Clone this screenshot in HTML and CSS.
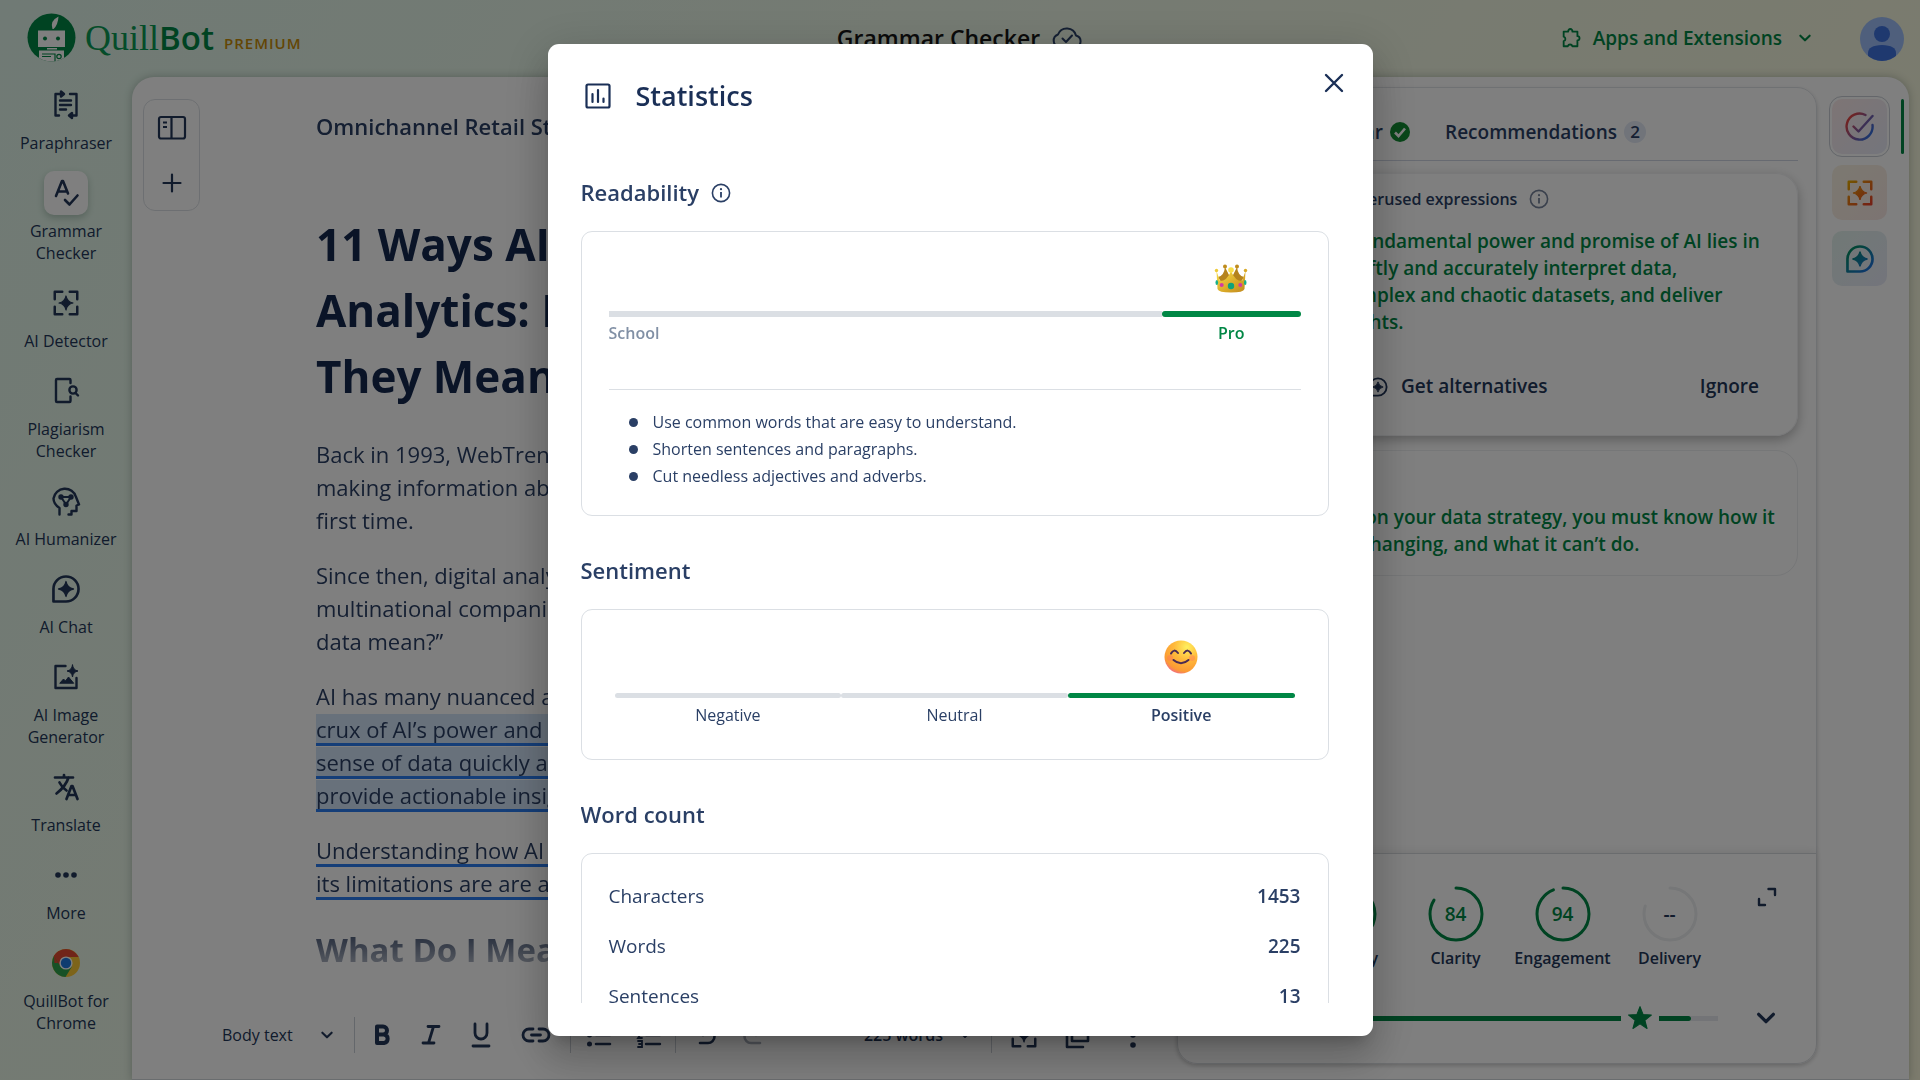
FILE: index.html
```html
<!DOCTYPE html>
<html lang="en">
<head>
<meta charset="utf-8">
<meta name="viewport" content="width=device-width, initial-scale=1">
<title>Grammar Checker - QuillBot</title>
<link rel="stylesheet" href="styles.css">
</head>
<body>
<svg class="sprite" aria-hidden="true">
  <symbol id="i-chat" viewBox="0 0 24 24"><path d="M2.6 21.4V12a9.4 9.4 0 1 1 9.4 9.4z" fill="none" stroke="currentColor" stroke-width="2" stroke-linejoin="round"/><path d="M12 6.4Q12.900 11.100 17.600 12 12.900 12.900 12 17.600 11.100 12.900 6.400 12 11.100 11.100 12 6.400z" fill="currentColor" stroke="currentColor" stroke-linejoin="round"/></symbol>
  <symbol id="i-detect" viewBox="0 0 24 24"><path d="M9 3H3v6M15 3h6v6M9 21H3v-6M15 21h6v-6" fill="none" stroke="currentColor" stroke-width="2" stroke-linejoin="round" stroke-linecap="round"/><path d="M12 6.400Q12.900 11.100 17.600 12 12.900 12.900 12 17.600 11.100 12.900 6.400 12 11.100 11.100 12 6.400z" fill="currentColor" stroke="currentColor" stroke-linejoin="round"/></symbol>
  <symbol id="i-down" viewBox="0 0 12 12"><path d="M2 4l4 4 4-4" fill="none" stroke="currentColor" stroke-width="1.800" stroke-linecap="round" stroke-linejoin="round"/></symbol>
  <symbol id="i-info" viewBox="0 0 20 20"><circle cx="10" cy="10" r="8.600" fill="none" stroke="currentColor" stroke-width="1.600"/><path d="M10 9v5.500" stroke="currentColor" stroke-width="1.800"/><circle cx="10" cy="6.200" r="1.100" fill="currentColor"/></symbol>
</svg>

<header class="topbar">
  <a class="brand" href="#">
    <svg width="49" height="49" viewBox="0 0 49 49" aria-hidden="true">
      <defs><clipPath id="disc"><circle cx="24.500" cy="24.500" r="24"/></clipPath></defs>
      <g clip-path="url(#disc)"><rect width="49" height="49" fill="#008745"/>
      <path d="M25.500 16q-3-8 6-12.500-.5 8.500-5 12.500" fill="#fff"/>
      <path d="M11 17.500h27V34H11zM20 35h10v1.500H20zM12 37.500h25V49H12z" fill="#fff"/>
      <circle cx="18" cy="25.500" r="2" fill="#008745"/><circle cx="31" cy="25.500" r="2" fill="#008745"/>
      <path d="M15 41h13v8M15 43.500h9" fill="none" stroke="#008745" stroke-width="1.200"/><circle cx="32" cy="43.500" r="2.200" fill="none" stroke="#008745" stroke-width="1.200"/></g>
    </svg>
    <span class="wordmark"><span class="quill">Quill</span><span class="bot">Bot</span></span>
    <span class="premium">PREMIUM</span>
  </a>
  <div class="page-name">
    <span>Grammar Checker</span>
    <svg width="32" height="24" viewBox="0 0 32 24" fill="none" stroke="#2a4066" stroke-width="2" stroke-linecap="round" stroke-linejoin="round" aria-hidden="true"><path d="M8 21a6.500 6.500 0 0 1-1-12.500A9.500 9.500 0 0 1 25 9.500 5.900 5.900 0 0 1 25 21z"/><path d="M11.500 12.500l3.500 3.500 6-6.500"/></svg>
  </div>
  <div class="account">
    <button class="apps" type="button">
      <svg width="22" height="22" viewBox="0 0 24 24" fill="none" stroke="currentColor" stroke-width="2" stroke-linejoin="round" aria-hidden="true"><path d="M4 5h5a2.300 2.300 0 1 1 4.500 0H19v5a2.300 2.300 0 1 1 0 4.600V21h-5.500a2.600 2.600 0 0 0-5 0H4v-5.500a2.600 2.600 0 0 0 0-5z"/></svg>
      <span>Apps and Extensions</span>
      <svg class="apps-arrow" width="14" height="14" aria-hidden="true"><use href="#i-down"/></svg>
    </button>
    <button class="avatar" type="button" aria-label="Account">
      <svg width="44" height="44" viewBox="0 0 44 44" aria-hidden="true"><defs><clipPath id="face"><circle cx="22" cy="22" r="22"/></clipPath></defs><g clip-path="url(#face)"><rect width="44" height="44" fill="#9ebff8"/><circle cx="22" cy="17" r="8" fill="#3f72df"/><path d="M8 44v-8q0-7.500 14-8 14 .5 14 8v8z" fill="#3f72df"/></g></svg>
    </button>
  </div>
</header>

<div class="workspace">
  <nav class="sidebar">
    <a class="tool" href="#"><span class="tile"><svg width="28" height="30" viewBox="0 0 28 30" fill="none" stroke="currentColor" stroke-width="2.400" stroke-linecap="round" stroke-linejoin="round"><path d="M9 4H3.500v21.500H7M18 4h6.500v21.500H19M8 10.500h11M8 15h11M8 19.500h6"/><path d="M9 1.500v5L12 4zM20 23v5l-3-2.500z" fill="currentColor"/></svg></span><span class="tool-name">Paraphraser</span></a>
    <a class="tool" href="#" aria-current="page"><span class="tile"><svg width="28" height="30" viewBox="0 0 28 30" fill="none" stroke="currentColor" stroke-width="2.600" stroke-linecap="round" stroke-linejoin="round"><path d="M4 18L10 3h1l5 12.500M6 13.500h8.500M13 22l4.500 4.500 8-9"/></svg></span><span class="tool-name">Grammar Checker</span></a>
    <a class="tool" href="#"><span class="tile"><svg width="30" height="30"><use href="#i-detect"/></svg></span><span class="tool-name">AI Detector</span></a>
    <a class="tool" href="#"><span class="tile"><svg width="28" height="28" viewBox="0 0 28 28" fill="none" stroke="currentColor" stroke-width="2.400" stroke-linecap="round" stroke-linejoin="round"><path d="M18.500 6V3q0-1-1-1H5Q4 2 4 3v21q0 1 1 1h12.500q1 0 1-1v-4.500"/><circle cx="21" cy="13" r="3.600"/><path d="M23.500 16l2.500 2.500"/></svg></span><span class="tool-name">Plagiarism Checker</span></a>
    <a class="tool" href="#"><span class="tile"><svg width="30" height="30" viewBox="0 0 30 30" fill="none" stroke="currentColor" stroke-width="2.400" stroke-linecap="round" stroke-linejoin="round"><path d="M8.500 28.500v-6.500Q2.500 18 2.500 12.500A11.500 11.200 0 0 1 25 11l3 7.500-2.500 1V25h-5v3.500h-3"/><path d="M10 11h10l-5 7.500z" stroke-width="2"/><circle cx="10" cy="11" r="1.500"/><circle cx="20" cy="11" r="1.500"/><circle cx="15" cy="18.500" r="1.500"/></svg></span><span class="tool-name">AI Humanizer</span></a>
    <a class="tool" href="#"><span class="tile"><svg width="32" height="32"><use href="#i-chat"/></svg></span><span class="tool-name">AI Chat</span></a>
    <a class="tool" href="#"><span class="tile"><svg width="28" height="28" viewBox="0 0 28 28" fill="none" stroke="currentColor" stroke-width="2.400" stroke-linecap="round" stroke-linejoin="round"><path d="M13.500 3H3.500v22h21V15"/><path d="M8 20l3.500-4 2 2 3-4 5 6z" fill="currentColor" stroke-width="1"/><path d="M20.500 2q.5 5 5.500 6-5 1-5.500 6-.5-5-5.500-6 5-1 5.500-6z" fill="currentColor" stroke-width="1"/></svg></span><span class="tool-name">AI Image Generator</span></a>
    <a class="tool" href="#"><span class="tile"><svg width="28" height="28" viewBox="0 0 28 28" fill="none" stroke="currentColor" stroke-width="2.700" stroke-linecap="round" stroke-linejoin="round"><path d="M3 4.500h18M12 2v2.500M16.500 4.500Q14 13 4.500 20.500M7.500 9.500q2.500 5 7 8M14.500 26l5-13h1l5 13M16.500 22h7.500"/></svg></span><span class="tool-name">Translate</span></a>
    <a class="tool" href="#"><span class="tile"><svg width="24" height="8" viewBox="0 0 24 8" fill="currentColor"><circle cx="4" cy="4" r="2.800"/><circle cx="12" cy="4" r="2.800"/><circle cx="20" cy="4" r="2.800"/></svg></span><span class="tool-name">More</span></a>
    <a class="tool" href="#"><span class="tile"><svg width="28" height="28" viewBox="0 0 28 28"><circle cx="14" cy="14" r="14" fill="#fbc934"/><path d="M14 14L1.900 7A14 14 0 0 0 13.500 28L20 17.500z" fill="#2ea24c"/><path d="M14 14H2.500L1.900 7a14 14 0 0 1 24.200 0L26.500 8H14z" fill="#e04a32"/><path d="M1.900 7l6.200 10.500L14 14z" fill="#2ea24c"/><path d="M1.900 7q2-3.500 5-5.100L10 9l-2.500 7z" fill="#e04a32"/><circle cx="14" cy="14" r="6.600" fill="#fff"/><circle cx="14" cy="14" r="5.200" fill="#1e78e0"/></svg></span><span class="tool-name">QuillBot for Chrome</span></a>
  </nav>

  <main class="panel">
    <section class="editor">
      <div class="page">
        <div class="side-tools">
          <button type="button" aria-label="Toggle documents"><svg width="30" height="26" viewBox="0 0 30 26" fill="none" stroke="currentColor" stroke-width="2.200"><rect x="2" y="2" width="26" height="21.500" rx="2"/><path d="M14.500 2v21.500M6 7.500h4M6 12h4" /></svg></button>
          <button type="button" aria-label="New document"><svg width="20" height="20" viewBox="0 0 20 20" stroke="currentColor" stroke-width="2.200" stroke-linecap="round"><path d="M10 1.500v17M1.500 10h17"/></svg></button>
        </div>
        <article class="doc">
          <p class="doc-title">Omnichannel Retail Strategy</p>
          <h1>11 Ways AI Impacts Data<br>Analytics: Examples and What<br>They Mean for Business</h1>
          <p>Back in 1993, WebTrends launched the first web tool,<br>making information about site visitors available for the<br>first time.</p>
          <p>Since then, digital analytics has matured, and today’s<br>multinational companies are asking, “What does all this<br>data mean?”</p>
          <p>AI has many nuanced and complex applications, but the<br><span class="hint picked">crux of AI’s power and promise is its ability to make<br>sense of data quickly and accurately, and then to<br>provide actionable insights.</span></p>
          <p><span class="hint">Understanding how AI is changing analytics and what<br>its limitations are are also key to a data strategy.</span></p>
          <h2>What Do I Mean by Analytics?</h2>
        </article>
      </div>
      <div class="format-bar">
        <div class="style-pick">
          <select aria-label="Text style"><option>Body text</option><option>Heading 1</option></select>
          <svg width="14" height="14" aria-hidden="true"><use href="#i-down"/></svg>
        </div>
        <div class="group marks">
          <button type="button" aria-label="Bold"><svg width="18" height="22" viewBox="0 0 18 22" fill="none" stroke="currentColor" stroke-width="4" stroke-linejoin="round"><path d="M4 2.500h6a4 4 0 0 1 0 8H4zM4 10.500h7a4.300 4.300 0 0 1 0 8.500H4z"/></svg></button>
          <button type="button" aria-label="Italic"><svg width="20" height="22" viewBox="0 0 20 22" fill="none" stroke="currentColor" stroke-width="2.800" stroke-linecap="round"><path d="M7 2.500h11M2 19h11M12.500 2.500l-5 16.500"/></svg></button>
          <button type="button" aria-label="Underline"><svg width="20" height="26" viewBox="0 0 20 26" fill="none" stroke="currentColor" stroke-width="2.800" stroke-linecap="round"><path d="M4 2v9a6 6 0 0 0 12 0V2M2 24h16"/></svg></button>
          <button type="button" aria-label="Link"><svg width="30" height="18" viewBox="0 0 30 18" fill="none" stroke="currentColor" stroke-width="2.800" stroke-linecap="round"><path d="M12 3H8a6 6 0 0 0 0 12h4M18 3h4a6 6 0 0 1 0 12h-4M10.500 9h9"/></svg></button>
        </div>
        <div class="group lists">
          <button type="button" aria-label="Bulleted list"><svg width="26" height="26" viewBox="0 0 26 26" fill="none" stroke="currentColor" stroke-width="2.600" stroke-linecap="round"><path d="M10 4h14M10 13h14M10 22h14"/><path stroke-width="5" d="M3.500 4h.01M3.500 13h.01M3.500 22h.01"/></svg></button>
          <button type="button" aria-label="Numbered list"><svg width="26" height="30" viewBox="0 0 26 30" fill="none" stroke="currentColor" stroke-width="2.400" stroke-linecap="round"><path d="M10 6h14M10 15h14M10 24h14"/><path d="M2 2h2v6M2 12h4l-4 6h4M2 21h4v6H2M3 24h3" stroke-width="1.800"/></svg></button>
        </div>
        <div class="group history">
          <button type="button" aria-label="Undo"><svg width="20" height="22" viewBox="0 0 20 22" fill="none" stroke="currentColor" stroke-width="2.600" stroke-linecap="round"><path d="M7 1L2 6l5 5M2 6h10a6.500 6.500 0 0 1 0 13H4"/></svg></button>
          <button type="button" aria-label="Redo" disabled><svg width="20" height="22" viewBox="0 0 20 22" fill="none" stroke="currentColor" stroke-width="2.600" stroke-linecap="round"><path d="M13 1l5 5-5 5M18 6H8a6.500 6.500 0 0 0 0 13h9"/></svg></button>
        </div>
        <button class="word-total" type="button">225 words <svg width="12" height="12" aria-hidden="true"><use href="#i-down"/></svg></button>
        <div class="group extras">
          <button type="button" aria-label="AI detector"><svg width="30" height="30"><use href="#i-detect"/></svg></button>
          <button type="button" aria-label="Copy"><svg width="26" height="28" viewBox="0 0 26 28" fill="none" stroke="currentColor" stroke-width="2.600" stroke-linecap="round" stroke-linejoin="round"><path d="M7 3h16v17H7zM2 8v18h16"/></svg></button>
          <button type="button" aria-label="More options"><svg width="8" height="28" viewBox="0 0 8 28" fill="currentColor"><circle cx="4" cy="4" r="2.800"/><circle cx="4" cy="14" r="2.800"/><circle cx="4" cy="24" r="2.800"/></svg></button>
        </div>
      </div>
    </section>

    <aside class="assistant">
      <div class="assistant-body">
        <div class="tabs">
          <a href="#">Grammar <svg width="20" height="20" viewBox="0 0 20 20" aria-hidden="true"><circle cx="10" cy="10" r="10" fill="#118c32"/><path d="M5 10.500l3.500 3.500L15 6.500" fill="none" stroke="#fff" stroke-width="2.600"/></svg></a>
          <a href="#">Recommendations <span class="count">2</span></a>
        </div>
        <article class="tip tip-open">
          <h3>Rephrase these overused expressions <svg width="20" height="20" aria-hidden="true"><use href="#i-info"/></svg></h3>
          <p>However, the fundamental power and promise of AI lies in<br>its ability to swiftly and accurately interpret data,<br>understand complex and chaotic datasets, and deliver<br>actionable insights.</p>
          <div class="tip-actions">
            <button type="button"><svg width="22" height="22" aria-hidden="true"><use href="#i-chat"/></svg>Get alternatives</button>
            <button type="button">Ignore</button>
          </div>
        </article>
        <article class="tip">
          <p>Before building on your data strategy, you must know how it<br>works, how it’s changing, and what it can’t do.</p>
        </article>
      </div>
      <div class="scores">
        <div class="score-row">
          <div class="score"><span class="ring"><svg width="56" height="56" viewBox="0 0 56 56"><circle cx="28" cy="28" r="26" pathLength="100" stroke-dasharray="90 100"/></svg><b>90</b></span><span>Fluency</span></div>
          <div class="score"><span class="ring"><svg width="56" height="56" viewBox="0 0 56 56"><circle cx="28" cy="28" r="26" pathLength="100" stroke-dasharray="84 100"/></svg><b>84</b></span><span>Clarity</span></div>
          <div class="score"><span class="ring"><svg width="56" height="56" viewBox="0 0 56 56"><circle cx="28" cy="28" r="26" pathLength="100" stroke-dasharray="94 100"/></svg><b>94</b></span><span>Engagement</span></div>
          <div class="score score-off"><span class="ring"><svg width="56" height="56" viewBox="0 0 56 56"><circle cx="28" cy="28" r="26" pathLength="100" stroke-dasharray="80 100"/></svg><b>--</b></span><span>Delivery</span></div>
          <button type="button" aria-label="Expand"><svg width="20" height="20" viewBox="0 0 20 20" fill="none" stroke="currentColor" stroke-width="2.400" stroke-linejoin="round" stroke-linecap="round"><path d="M11.500 2H18v6M2 12v6h6"/></svg></button>
        </div>
        <div class="goal">
          <div class="meter"><span class="meter-fill"></span><svg width="26" height="26" viewBox="0 0 24 24" fill="currentColor" stroke="currentColor" stroke-linejoin="round"><path d="M12 1.500l2.800 7.300 7.700.4-6 4.900 2 7.600L12 17.400l-6.500 4.300 2-7.600-6-4.900 7.700-.4z"/></svg><span class="meter-rest"></span><span class="meter-empty"></span></div>
          <button type="button" aria-label="Collapse"><svg width="22" height="22"><use href="#i-down"/></svg></button>
        </div>
      </div>
    </aside>

    <div class="rail">
      <button class="rail-check" type="button" aria-label="Suggestions"><svg width="32" height="32" viewBox="0 0 32 32" fill="none" stroke="url(#g1)" stroke-width="2.400" stroke-linecap="round" stroke-linejoin="round"><defs><linearGradient id="g1" x1="2" y1="8" x2="28" y2="26" gradientUnits="userSpaceOnUse"><stop offset="0" stop-color="#f04438"/><stop offset=".5" stop-color="#8a5a9a"/><stop offset="1" stop-color="#2470e8"/></linearGradient></defs><path d="M21.500 4A13 13 0 1 0 28.500 14M9.500 15.500l5 5L28.500 5"/></svg></button>
      <button class="rail-detect" type="button" aria-label="AI detector"><svg width="30" height="30" viewBox="0 0 24 24" fill="none" stroke="url(#g2)"><defs><linearGradient id="g2" x1="3" y1="3" x2="21" y2="21" gradientUnits="userSpaceOnUse"><stop offset="0" stop-color="#e8a800"/><stop offset="1" stop-color="#e8402a"/></linearGradient></defs><path d="M9 3H3v6M15 3h6v6M9 21H3v-6M15 21h6v-6" stroke-width="2" stroke-linecap="round" stroke-linejoin="round"/><path d="M12 6.400Q12.900 11.100 17.600 12 12.900 12.900 12 17.600 11.100 12.900 6.400 12 11.100 11.100 12 6.400z" fill="url(#g2)"/></svg></button>
      <button class="rail-chat" type="button" aria-label="AI chat"><svg width="32" height="32" viewBox="0 0 24 24" fill="none" stroke="url(#g3)"><defs><linearGradient id="g3" x1="3" y1="3" x2="21" y2="21" gradientUnits="userSpaceOnUse"><stop offset="0" stop-color="#009055"/><stop offset="1" stop-color="#1f6fe8"/></linearGradient></defs><path d="M2.600 21.400V12a9.400 9.400 0 1 1 9.400 9.400z" stroke-width="2" stroke-linejoin="round"/><path d="M12 6.400Q12.900 11.100 17.600 12 12.900 12.900 12 17.600 11.100 12.900 6.400 12 11.100 11.100 12 6.400z" fill="url(#g3)"/></svg></button>
    </div>
  </main>
</div>

<div class="backdrop">
  <section class="modal" role="dialog" aria-modal="true" aria-labelledby="stats-title">
    <header class="modal-head">
      <svg width="26" height="26" viewBox="0 0 26 26" fill="none" stroke="currentColor" stroke-width="2.200" stroke-linecap="round" aria-hidden="true"><rect x="1.500" y="1.500" width="23" height="23" rx="1.500"/><path d="M7.500 11v8M13 7v12M18.500 15.500V19"/></svg>
      <h2 id="stats-title">Statistics</h2>
      <button class="close" type="button" aria-label="Close"><svg width="20" height="20" viewBox="0 0 20 20" stroke="currentColor" stroke-width="2.400" stroke-linecap="round"><path d="M2 2l16 16M18 2L2 18"/></svg></button>
    </header>
    <div class="modal-body">
      <h3>Readability <svg width="20" height="20" aria-hidden="true"><use href="#i-info"/></svg></h3>
      <div class="card readability">
        <div class="levels">
          <div class="level level-school"><span class="mark"></span><span class="bar"></span><span class="level-name">School</span></div>
          <div class="level level-pro"><span class="mark">
            <svg width="36" height="32" viewBox="0 0 36 32" aria-hidden="true"><defs><linearGradient id="gold" x1="0" y1="0" x2="1" y2="1"><stop offset="0" stop-color="#f7df4a"/><stop offset=".6" stop-color="#d9a827"/><stop offset="1" stop-color="#c08a20"/></linearGradient></defs>
            <path d="M12 4l5 10-7 8-5-8q6-1 7-10zM24 4l-5 10 7 8 5-8q-6-1-7-10z" fill="#b5831c"/>
            <path d="M3.500 8L7 18q7 0 11-10 4 10 11 10l3.500-10-1 18q-1 3.500-13.500 3.500T4.500 26z" fill="url(#gold)"/>
            <circle cx="18" cy="7" r="2.800" fill="#f8de48"/><circle cx="12" cy="3.500" r="2" fill="#c08c1c"/><circle cx="24" cy="3.500" r="2" fill="#c08c1c"/><circle cx="3.500" cy="7.500" r="1.700" fill="#eecb39"/><circle cx="32.500" cy="7.500" r="1.700" fill="#d9aa28"/>
            <circle cx="18" cy="23" r="3.200" fill="#0fa37b"/><circle cx="8.700" cy="22" r="2" fill="#d23ba4"/><circle cx="27.300" cy="22" r="2" fill="#d23ba4"/><ellipse cx="3.800" cy="19.500" rx="1.300" ry="2.500" fill="#17b08a"/><ellipse cx="32.200" cy="19.500" rx="1.300" ry="2.500" fill="#17b08a"/></svg>
          </span><span class="bar"></span><span class="level-name">Pro</span></div>
        </div>
        <ul>
          <li>Use common words that are easy to understand.</li>
          <li>Shorten sentences and paragraphs.</li>
          <li>Cut needless adjectives and adverbs.</li>
        </ul>
      </div>
      <h3>Sentiment</h3>
      <div class="card sentiment">
        <div class="mood"><span class="mark"></span><span class="bar"></span><span class="level-name">Negative</span></div>
        <div class="mood"><span class="mark"></span><span class="bar"></span><span class="level-name">Neutral</span></div>
        <div class="mood mood-on"><span class="mark">
          <svg width="34" height="34" viewBox="0 0 34 34" aria-hidden="true"><defs><radialGradient id="skin" cx=".68" cy=".2" r=".9"><stop offset="0" stop-color="#fff05e"/><stop offset=".45" stop-color="#ffb83a"/><stop offset=".82" stop-color="#fb9a34"/><stop offset="1" stop-color="#ef5e9a"/></radialGradient></defs><circle cx="17" cy="17" r="16.500" fill="url(#skin)"/><circle cx="6" cy="18" r="3" fill="#ff6f5e" opacity=".4"/><circle cx="28" cy="18" r="3" fill="#ff6f5e" opacity=".4"/><path d="M7 13.500q3-5.500 7-.5M20 13q4-5 7 .5M9.500 20q7.500 6.500 15 0" fill="none" stroke="#4b2b52" stroke-width="2" stroke-linecap="round"/></svg>
        </span><span class="bar"></span><span class="level-name">Positive</span></div>
      </div>
      <h3>Word count</h3>
      <div class="card counts">
        <table>
          <tr><th scope="row">Characters</th><td>1453</td></tr>
          <tr><th scope="row">Words</th><td>225</td></tr>
          <tr><th scope="row">Sentences</th><td>13</td></tr>
        </table>
      </div>
    </div>
  </section>
</div>
</body>
</html>
```
FILE: styles.css
```css
* { box-sizing: border-box; }

:root {
  --navy: #223659;
  --ink: #2a3f65;
  --deep: #14284f;
  --green: #008745;
  --line: #dbdfe4;
}

body {
  margin: 0;
  height: 100vh;
  overflow: hidden;
  display: flex;
  flex-direction: column;
  background: linear-gradient(125deg, #e0f5ea 0%, #ecf6e6 40%, #f4f6de 70%, #f8f6da 100%);
  color: var(--navy);
  font: 16px/22px "Open Sans", "Noto Sans", sans-serif;
}

a { color: inherit; text-decoration: none; }
h1, h2, h3, p, ul { margin: 0; padding: 0; }
svg { display: block; flex: none; }
button, select {
  padding: 0;
  border: 0;
  background: none;
  color: inherit;
  font: inherit;
  cursor: pointer;
}
button { display: flex; align-items: center; justify-content: center; }
.sprite { display: none; }

/* Top bar */
.topbar {
  flex: none;
  display: grid;
  grid-template-columns: 1fr auto 1fr;
  align-items: center;
  height: 77px;
  padding: 0 16px 2px;
}
.brand { display: flex; align-items: center; margin-left: 11px; }
.wordmark { display: flex; align-items: baseline; margin-left: 9px; line-height: 48px; color: var(--green); }
.quill { font: 36px/48px "Liberation Serif", serif; color: #0a9a54; }
.bot { font-size: 33px; font-weight: 600; }
.premium { margin: 10px 0 0 10px; font-size: 15px; font-weight: 600; letter-spacing: 1px; color: #c78c08; }
.page-name { display: flex; align-items: center; gap: 11px; font-size: 23px; font-weight: 600; color: #161616; }
.account { display: flex; align-items: center; justify-content: flex-end; gap: 48px; }
.apps { gap: 11px; font-size: 19px; font-weight: 600; color: var(--green); }
.apps-arrow { margin-left: 5px; }
.avatar { margin-top: 3px; }

.workspace { flex: 1; display: flex; min-height: 0; padding-right: 11px; }

/* Product navigation */
.sidebar { flex: none; width: 132px; padding-top: 6px; display: flex; flex-direction: column; gap: 17px; }
.tool { display: flex; flex-direction: column; align-items: center; gap: 5px; text-align: center; }
.tile { display: flex; align-items: center; justify-content: center; width: 44px; height: 44px; border-radius: 10px; }
.tool[aria-current] .tile { background: #fff; box-shadow: 0 3px 7px rgba(20, 60, 40, .25); }
.tool-name { max-width: 112px; }

/* Main panel */
.panel {
  flex: 1;
  min-width: 0;
  display: flex;
  border-bottom: 1px solid #d5dade;
  border-radius: 22px 22px 0 0;
  background: #fff;
  box-shadow: 0 0 8px rgba(40, 60, 50, .3);
}
.editor { flex: 1; min-width: 0; display: flex; flex-direction: column; }
.page {
  flex: 1;
  min-height: 0;
  overflow: hidden;
  display: flex;
  align-items: flex-start;
  padding-left: 11px;
  mask-image: linear-gradient(#000 840px, transparent 912px);
}
.side-tools {
  flex: none;
  width: 57px;
  margin: 22px 116px 0 0;
  border: 1px solid var(--line);
  border-radius: 12px;
}
.side-tools button { width: 55px; height: 55px; }
.doc { white-space: nowrap; padding-top: 33px; font-size: 22px; line-height: 33px; color: var(--ink); }
.doc p + p { margin-top: 22px; }
.doc-title { font-weight: 600; }
.doc h1 { margin: 68px 0 29px; font-size: 44px; line-height: 66px; font-weight: 700; color: var(--deep); }
.doc h2 { margin-top: 25px; font-size: 33px; line-height: 50px; font-weight: 700; color: var(--deep); }
.hint { padding-bottom: 2px; box-shadow: inset 0 -3px #2a7cf0; -webkit-box-decoration-break: clone; box-decoration-break: clone; }
.picked { background: #d0e2f6; }

.format-bar { flex: none; display: flex; align-items: center; height: 88px; padding: 0 22px 0 90px; }
.style-pick { display: flex; align-items: center; width: 132px; }
.style-pick select { appearance: none; width: 98px; }
.group { display: flex; align-items: center; height: 36px; border-left: 1px solid #c9ced6; }
.marks { width: 216px; padding-left: 18px; gap: 30px; }
.lists { width: 105px; padding-left: 15px; gap: 24px; }
.history { width: 110px; padding-left: 20px; gap: 27px; }
.history button:disabled { color: #a9b0bc; }
.word-total { flex: 1; justify-content: flex-end; gap: 16px; padding-right: 20px; font-weight: 600; }
.extras { padding-left: 17px; gap: 26px; }
.extras button:last-child { margin-left: 12px; width: 8px; margin-right: 18px; }

/* Assistant */
.assistant {
  flex: none;
  width: 640px;
  margin: 10px 0 15px;
  display: flex;
  flex-direction: column;
  border: 1px solid #dfe2e6;
  border-radius: 20px;
  box-shadow: 0 2px 4px rgba(0, 0, 0, .18);
}
.assistant-body { flex: 1; min-height: 0; padding: 17px 18px 0 17px; }
.tabs { display: flex; align-items: center; justify-content: flex-end; gap: 35px; height: 56px; padding: 0 152px 2px 0; border-bottom: 1px solid #cfd5e3; font-size: 19px; font-weight: 600; color: var(--ink); }
.tabs a { display: flex; align-items: center; gap: 7px; }
.count { width: 22px; border-radius: 11px; background: #e2e8f5; font-size: 17px; font-weight: 600; text-align: center; }
.tip { margin-top: 14px; padding: 53px 24px 17px; border: 1px solid #eceef0; border-radius: 22px; font-size: 19px; line-height: 27px; font-weight: 600; color: var(--green); white-space: nowrap; }
.tip-open { margin-top: 12px; padding: 14px 24px 35px 30px; border-color: #f0f1f3; box-shadow: 0 4px 12px rgba(0, 0, 0, .28); }
.tip h3 { display: flex; align-items: center; gap: 12px; margin-bottom: 18px; font-size: 16px; line-height: 22px; font-weight: 600; color: var(--ink); }
.tip h3 svg { color: #75829a; }
.tip-actions { display: flex; justify-content: space-between; margin-top: 37px; padding: 0 14px 0 141px; color: var(--navy); }
.tip-actions button { gap: 12px; }

.scores { flex: none; height: 210px; padding: 32px 39px 0 30px; border-top: 1px solid #d4d8dc; font-weight: 600; box-shadow: 0 -2px 8px rgba(0, 0, 0, .08); border-radius: 0 0 20px 20px; }
.score-row { display: flex; align-items: flex-start; justify-content: flex-end; }
.score { display: flex; flex-direction: column; align-items: center; gap: 5px; width: 107px; }
.ring { display: grid; place-items: center; color: var(--green); }
.ring svg, .ring b { grid-area: 1 / 1; }
.ring b { font-size: 19px; font-weight: 600; }
.ring circle { fill: none; stroke: currentColor; stroke-width: 3; stroke-linecap: round; transform: rotate(-90deg); transform-origin: center; }
.score-off .ring svg { color: #eceef0; }
.score-off .ring b { color: var(--navy); }
.score-row button { margin: 1px 0 0 34px; }
.goal { display: flex; align-items: center; justify-content: flex-end; gap: 37px; margin-top: 36px; }
.meter { flex: 1; display: flex; align-items: center; color: var(--green); }
.meter-fill { flex: 1; height: 5px; margin-right: 6px; background: var(--green); }
.meter-rest { width: 32px; height: 5px; margin-left: 6px; border-radius: 0 3px 3px 0; background: var(--green); }
.meter-empty { width: 27px; height: 5px; background: #e6e9ef; }

.rail { flex: none; width: 92px; padding: 22px 0 0 15px; display: flex; flex-direction: column; gap: 11px; }
.rail button { width: 55px; height: 55px; border-radius: 10px; }
.rail-check { position: relative; background: linear-gradient(135deg, #fceaea, #e8ebf8); outline: 1px solid #c8cdd4; outline-offset: 2px; }
.rail-check::after { content: ""; position: absolute; left: 69px; top: 0; width: 3px; height: 55px; border-radius: 2px; background: var(--green); }
.rail-detect { background: linear-gradient(135deg, #f8f2e2, #f8e8e4); }
.rail-chat { background: linear-gradient(135deg, #e2f2ec, #e8eaf8); }

/* Statistics dialog */
.backdrop { position: fixed; inset: 0; display: flex; align-items: center; justify-content: center; padding: 44px; background: rgba(0, 0, 0, .5); }
.modal {
  display: flex;
  flex-direction: column;
  width: 100%;
  max-width: 825px;
  height: 100%;
  padding: 33px 44px 33px 33px;
  border-radius: 11px;
  background: #fff;
  box-shadow: 0 11px 15px -7px rgba(0, 0, 0, .2), 0 24px 38px 3px rgba(0, 0, 0, .14), 0 9px 46px 8px rgba(0, 0, 0, .12);
}
.modal-head { flex: none; display: flex; align-items: center; height: 38px; padding-left: 4px; color: #1a2f56; }
.modal-head h2 { flex: 1; margin-left: 25px; font-size: 27px; line-height: 38px; font-weight: 600; }
.close { align-self: flex-start; margin: -4px -15px 0 0; }
.modal-body { flex: 1; min-height: 0; overflow-y: auto; scrollbar-width: none; padding-top: 61px; color: var(--ink); }
.modal-body h3 { display: flex; align-items: center; gap: 12px; margin: 38px 0 22px; font-size: 22px; line-height: 33px; font-weight: 600; }
.modal-body h3:first-child { margin-top: 0; }
.card { padding: 0 27px; border: 1px solid var(--line); border-radius: 11px; }
.level, .mood { display: flex; flex-direction: column; }
.mark { display: flex; justify-content: center; align-items: flex-end; }
.bar { background: var(--line); }
.levels { display: flex; padding: 27px 0 45px; border-bottom: 1px solid var(--line); }
.levels .mark { height: 36px; }
.levels .bar { height: 6px; margin: 16px 0 5px; }
.level-school { flex: 4; color: #8190a5; }
.level-pro { flex: 1; text-align: center; color: var(--green); }
.level-pro .bar, .mood-on .bar { background: var(--green); border-radius: 3px; }
.level-name { font-weight: 600; }
.readability ul { padding: 19px 0 25px 20px; line-height: 27px; list-style: none; }
.readability li { display: flex; align-items: center; gap: 15px; }
.readability li::before { content: ""; width: 9px; height: 9px; border-radius: 50%; background: currentColor; }
.sentiment { display: flex; padding: 28px 33px 33px; text-align: center; }
.mood { flex: 1; }
.mood .mark { height: 36px; }
.mood .bar { height: 5px; margin: 19px 0 6px; border-radius: 3px; }
.mood .level-name { font-weight: 400; }
.mood-on .level-name { font-weight: 600; }
.counts { padding: 17px 27px; }
.counts table { width: 100%; border-collapse: collapse; font-size: 19px; line-height: 28px; }
.counts th { padding: 11px 0; text-align: left; font-weight: 400; }
.counts td { padding: 11px 0; text-align: right; font-weight: 600; }
```
